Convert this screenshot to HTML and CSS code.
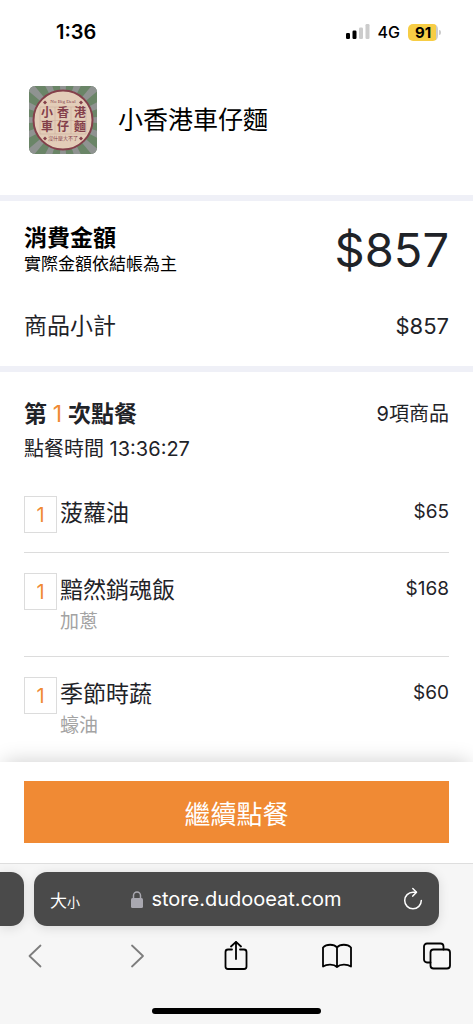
FILE: index.html
```html
<!DOCTYPE html>
<html lang="zh-Hant">
<head>
  <meta charset="utf-8">
  <meta name="viewport" content="width=device-width, initial-scale=1">
  <title>小香港車仔麵</title>
  <link rel="stylesheet" href="styles.css">
</head>
<body>
  <div class="status-bar">
    <span class="clock">1:36</span>
    <div class="status-icons">
      <svg width="24" height="16" viewBox="0 0 24 16">
        <rect x="0" y="9" width="4" height="6" rx="1.2" fill="#000"/>
        <rect x="6.5" y="6.5" width="4" height="8.5" rx="1.2" fill="#000"/>
        <rect x="13" y="3.5" width="4" height="11.5" rx="1.2" fill="#ccc"/>
        <rect x="19.5" y="0" width="4" height="15" rx="1.2" fill="#ccc"/>
      </svg>
      <span class="network">4G</span>
      <span class="battery">91</span>
    </div>
  </div>

  <main>
    <header class="store">
      <svg class="logo" width="68" height="68" viewBox="0 0 68 68">
        <rect width="68" height="68" fill="#6a8567"/>
        <g fill="#8f9391">
          <path id="ray" d="M34 34 L29.5 -16 H38.5 Z"/>
          <use href="#ray" transform="rotate(22.5 34 34)"/>
          <use href="#ray" transform="rotate(45 34 34)"/>
          <use href="#ray" transform="rotate(67.5 34 34)"/>
          <use href="#ray" transform="rotate(90 34 34)"/>
          <use href="#ray" transform="rotate(112.5 34 34)"/>
          <use href="#ray" transform="rotate(135 34 34)"/>
          <use href="#ray" transform="rotate(157.5 34 34)"/>
          <use href="#ray" transform="rotate(180 34 34)"/>
          <use href="#ray" transform="rotate(202.5 34 34)"/>
          <use href="#ray" transform="rotate(225 34 34)"/>
          <use href="#ray" transform="rotate(247.5 34 34)"/>
          <use href="#ray" transform="rotate(270 34 34)"/>
          <use href="#ray" transform="rotate(292.5 34 34)"/>
          <use href="#ray" transform="rotate(315 34 34)"/>
          <use href="#ray" transform="rotate(337.5 34 34)"/>
        </g>
        <circle cx="34" cy="34" r="29.5" fill="#e3cdb8" stroke="#84404a" stroke-width="2"/>
        <path d="M11 21H57V48H11ZM26 21V48M42 21V48M11 34.5H57" fill="none" stroke="#cfae9d" stroke-width=".6"/>
        <path d="M16 14.5l2 2-2 2-2-2zM52 14.5l2 2-2 2-2-2zM16 50.5l2 2-2 2-2-2zM52 50.5l2 2-2 2-2-2z" fill="#84404a"/>
        <text class="logo-small" x="34" y="17" text-anchor="middle">No Big Deal</text>
        <text class="logo-name"><tspan x="12 28 45" y="31">小香港</tspan><tspan x="12 28 45" y="45">車仔麵</tspan></text>
        <text class="logo-small" x="34" y="54" text-anchor="middle">沒什麼大不了</text>
      </svg>
      <h1>小香港車仔麵</h1>
    </header>

    <section class="summary">
      <div class="row">
        <div>
          <h2 class="summary-title">消費金額</h2>
          <p class="summary-note">實際金額依結帳為主</p>
        </div>
        <span class="total">$857</span>
      </div>
      <div class="row subtotal">
        <span>商品小計</span>
        <span class="subtotal-price">$857</span>
      </div>
    </section>

    <section class="order">
      <div class="row">
        <h2>第 <span class="round">1</span> 次點餐</h2>
        <span class="count">9項商品</span>
      </div>
      <p class="time">點餐時間 13:36:27</p>
      <ul class="items">
        <li class="item">
          <span class="qty">1</span>
          <div class="info">
            <h3>菠蘿油</h3>
          </div>
          <span class="price">$65</span>
        </li>
        <li class="item">
          <span class="qty">1</span>
          <div class="info">
            <h3>黯然銷魂飯</h3>
            <p>加蔥</p>
          </div>
          <span class="price">$168</span>
        </li>
        <li class="item">
          <span class="qty">1</span>
          <div class="info">
            <h3>季節時蔬</h3>
            <p>蠔油</p>
          </div>
          <span class="price">$60</span>
        </li>
      </ul>
    </section>
  </main>

  <div class="action">
    <button class="continue-btn">繼續點餐</button>
  </div>

  <footer class="browser">
    <div class="tabs">
      <div class="prev-tab"></div>
      <div class="address">
        <button class="text-size" aria-label="文字大小">大<small>小</small></button>
        <button class="url">
          <svg width="12" height="17" viewBox="0 0 12 17">
            <path d="M2.5 8V4.5a3.5 3.5 0 0 1 7 0V8" fill="none" stroke="#a9a8b0" stroke-width="1.5"/>
            <rect x="0" y="7" width="12" height="10" rx="1.5" fill="#a9a8b0"/>
          </svg>
          store.dudooeat.com
        </button>
        <button class="reload" aria-label="重新載入">
          <svg width="20" height="24" viewBox="0 0 20 24" fill="none" stroke="#fff" stroke-width="1.5" stroke-linecap="round" stroke-linejoin="round">
            <path d="M18.3 13.5a8.3 8.3 0 1 1-8.3-8.3h3.3"/>
            <path d="M9.8 1.5l3.7 3.7-3.7 3.9"/>
          </svg>
        </button>
      </div>
    </div>
    <nav class="toolbar">
      <button aria-label="上一頁">
        <svg width="30" height="30" viewBox="0 0 30 30" stroke="#7d7d7d"><path d="M20.5 4.5L9.5 15l11 10.5"/></svg>
      </button>
      <button aria-label="下一頁">
        <svg width="30" height="30" viewBox="0 0 30 30" stroke="#7d7d7d"><path d="M11 4.5L22 15l-11 10.5"/></svg>
      </button>
      <button aria-label="分享">
        <svg width="30" height="30" viewBox="0 0 30 30" stroke="#000"><path d="M11 8.5H7A2.5 2.5 0 0 0 4.5 11v14.5A2.5 2.5 0 0 0 7 28h16a2.5 2.5 0 0 0 2.5-2.5V11A2.5 2.5 0 0 0 23 8.5h-4M15 18V.8M10 5.5l5-4.7 5 4.7"/></svg>
      </button>
      <button aria-label="書籤">
        <svg width="30" height="30" viewBox="0 0 30 30" stroke="#000"><path d="M15 6.5V26c-3-3-10-3.200-14-.5V6.500c3.500-3.700 11-3.700 14 0c3-3.700 10.500-3.700 14 0v19c-4-2.700-11-2.500-14 .5"/></svg>
      </button>
      <button aria-label="分頁">
        <svg width="30" height="30" viewBox="0 0 30 30" stroke="#000"><rect x="8.5" y="8.5" width="19.5" height="19" rx="3"/><path d="M8.5 21.5H5a3 3 0 0 1-3-3v-13a3 3 0 0 1 3-3h13.5a3 3 0 0 1 3 3v3"/></svg>
      </button>
    </nav>
    <div class="home-indicator"></div>
  </footer>
</body>
</html>
```

FILE: styles.css
```css
* {
  box-sizing: border-box;
}
body {
  margin: 0;
  min-height: 100vh;
  display: flex;
  flex-direction: column;
  font-family: Inter, "Noto Sans CJK TC", sans-serif;
  color: #1f2328;
  background: #fff;
}
h1, h2, h3, p, ul {
  margin: 0;
  padding: 0;
  font-weight: 400;
}
button {
  padding: 0;
  border: none;
  background: none;
  font-family: inherit;
  color: inherit;
  cursor: pointer;
}
svg {
  display: block;
}

/* status bar */
.status-bar {
  display: flex;
  justify-content: space-between;
  align-items: center;
  height: 64px;
  padding: 0 35px 0 56px;
  color: #000;
}
.clock {
  font-size: 20px;
  font-weight: 600;
}
.status-icons {
  display: flex;
  align-items: center;
  gap: 8px;
}
.network {
  font-size: 16px;
  font-weight: 500;
}
.battery {
  position: relative;
  width: 30px;
  height: 17px;
  border-radius: 5px;
  background: linear-gradient(90deg, #f7cd45 28px, #ccc 28px);
  font-size: 15px;
  line-height: 17px;
  font-weight: 700;
  text-align: center;
}
.battery::after {
  content: "";
  position: absolute;
  top: 6px;
  right: -3px;
  width: 2px;
  height: 5px;
  border-radius: 0 2px 2px 0;
  background: #ccc;
}

/* store */
.store {
  display: flex;
  align-items: center;
  gap: 21px;
  padding: 22px 24px 41px 29px;
}
.store h1 {
  font-size: 25px;
  line-height: 32px;
  color: #000;
}
.logo {
  border-radius: 6px;
}
.logo-name {
  font-family: "Noto Sans CJK TC", sans-serif;
  font-size: 12px;
  font-weight: 700;
  fill: #84404a;
}
.logo-small {
  font-family: "Liberation Serif", "Noto Sans CJK TC", serif;
  font-size: 5px;
  fill: #84404a;
}

/* amounts */
.summary,
.order {
  border-top: 6px solid #eff0f7;
}
.summary {
  padding: 23px 24px 24px;
}
.row {
  display: flex;
  justify-content: space-between;
  align-items: center;
}
.summary-title {
  font-size: 23px;
  line-height: 28px;
  font-weight: 700;
  color: #000;
}
.summary-note {
  font-size: 17px;
  line-height: 24px;
  color: #000;
}
.total {
  font-size: 47px;
  line-height: 52px;
}
.subtotal {
  margin-top: 34px;
  font-size: 23px;
  line-height: 32px;
}
.subtotal-price {
  font-size: 22px;
}

/* order */
.order {
  padding: 26px 24px 0;
}
.order h2 {
  font-size: 23px;
  line-height: 32px;
  font-weight: 600;
}
.order h2 .round,
.qty {
  color: #f08a34;
  font-weight: 400;
}
.count {
  font-size: 20px;
  line-height: 28px;
}
.time {
  margin-top: 5px;
  font-size: 20px;
  line-height: 28px;
}
.items {
  margin-top: 13px;
  list-style: none;
}
.item {
  display: flex;
  align-items: flex-start;
  gap: 3px;
  padding: 20px 0 19px;
  border-bottom: 1px solid #dcdcdc;
}
.item:last-child {
  border-bottom: none;
}
.qty {
  width: 33px;
  height: 37px;
  border: 1px solid #dcdcdc;
  font-size: 20px;
  line-height: 37px;
  text-align: center;
}
.info {
  flex: 1;
}
.info h3 {
  font-size: 23px;
  line-height: 34px;
}
.info p {
  font-size: 19px;
  line-height: 30px;
  color: #a3a3a3;
}
.price {
  font-size: 19px;
  line-height: 32px;
}

/* bottom button */
.action {
  margin-top: auto;
  padding: 19px 24px 20px;
  background: #fff;
  box-shadow: 0 -4px 20px -4px rgba(0, 0, 0, 0.2);
}
.continue-btn {
  width: 100%;
  height: 62px;
  background: #f08a34;
  color: #fff;
  font-size: 26px;
}

/* browser chrome */
.browser {
  position: relative;
  padding: 8px 0 10px;
  border-top: 1px solid #dedede;
  background: #f6f6f6;
}
.tabs {
  display: flex;
  gap: 10px;
  padding-right: 34px;
}
.prev-tab,
.address {
  height: 54px;
  background: #4a4a4a;
  box-shadow: 0 2px 12px rgba(0, 0, 0, 0.12);
}
.prev-tab {
  width: 24px;
  border-radius: 0 13px 13px 0;
}
.address {
  flex: 1;
  display: flex;
  justify-content: space-between;
  align-items: center;
  padding: 0 16px;
  border-radius: 13px;
  color: #fff;
}
.text-size {
  width: 32px;
  font-size: 17px;
  text-align: left;
}
.text-size small {
  font-size: 13px;
}
.url {
  display: flex;
  align-items: center;
  gap: 8px;
  font-size: 20px;
}
.reload {
  display: flex;
  justify-content: flex-end;
  width: 32px;
}
.toolbar {
  display: flex;
  justify-content: space-between;
  margin-top: 8px;
  padding: 0 21px 0 20px;
}
.toolbar button {
  height: 44px;
}
.toolbar svg {
  fill: none;
  stroke-width: 1.8;
  stroke-linecap: round;
  stroke-linejoin: round;
}
.home-indicator {
  width: 169px;
  height: 6px;
  margin: 30px auto 0;
  border-radius: 3px;
  background: #000;
}
```
